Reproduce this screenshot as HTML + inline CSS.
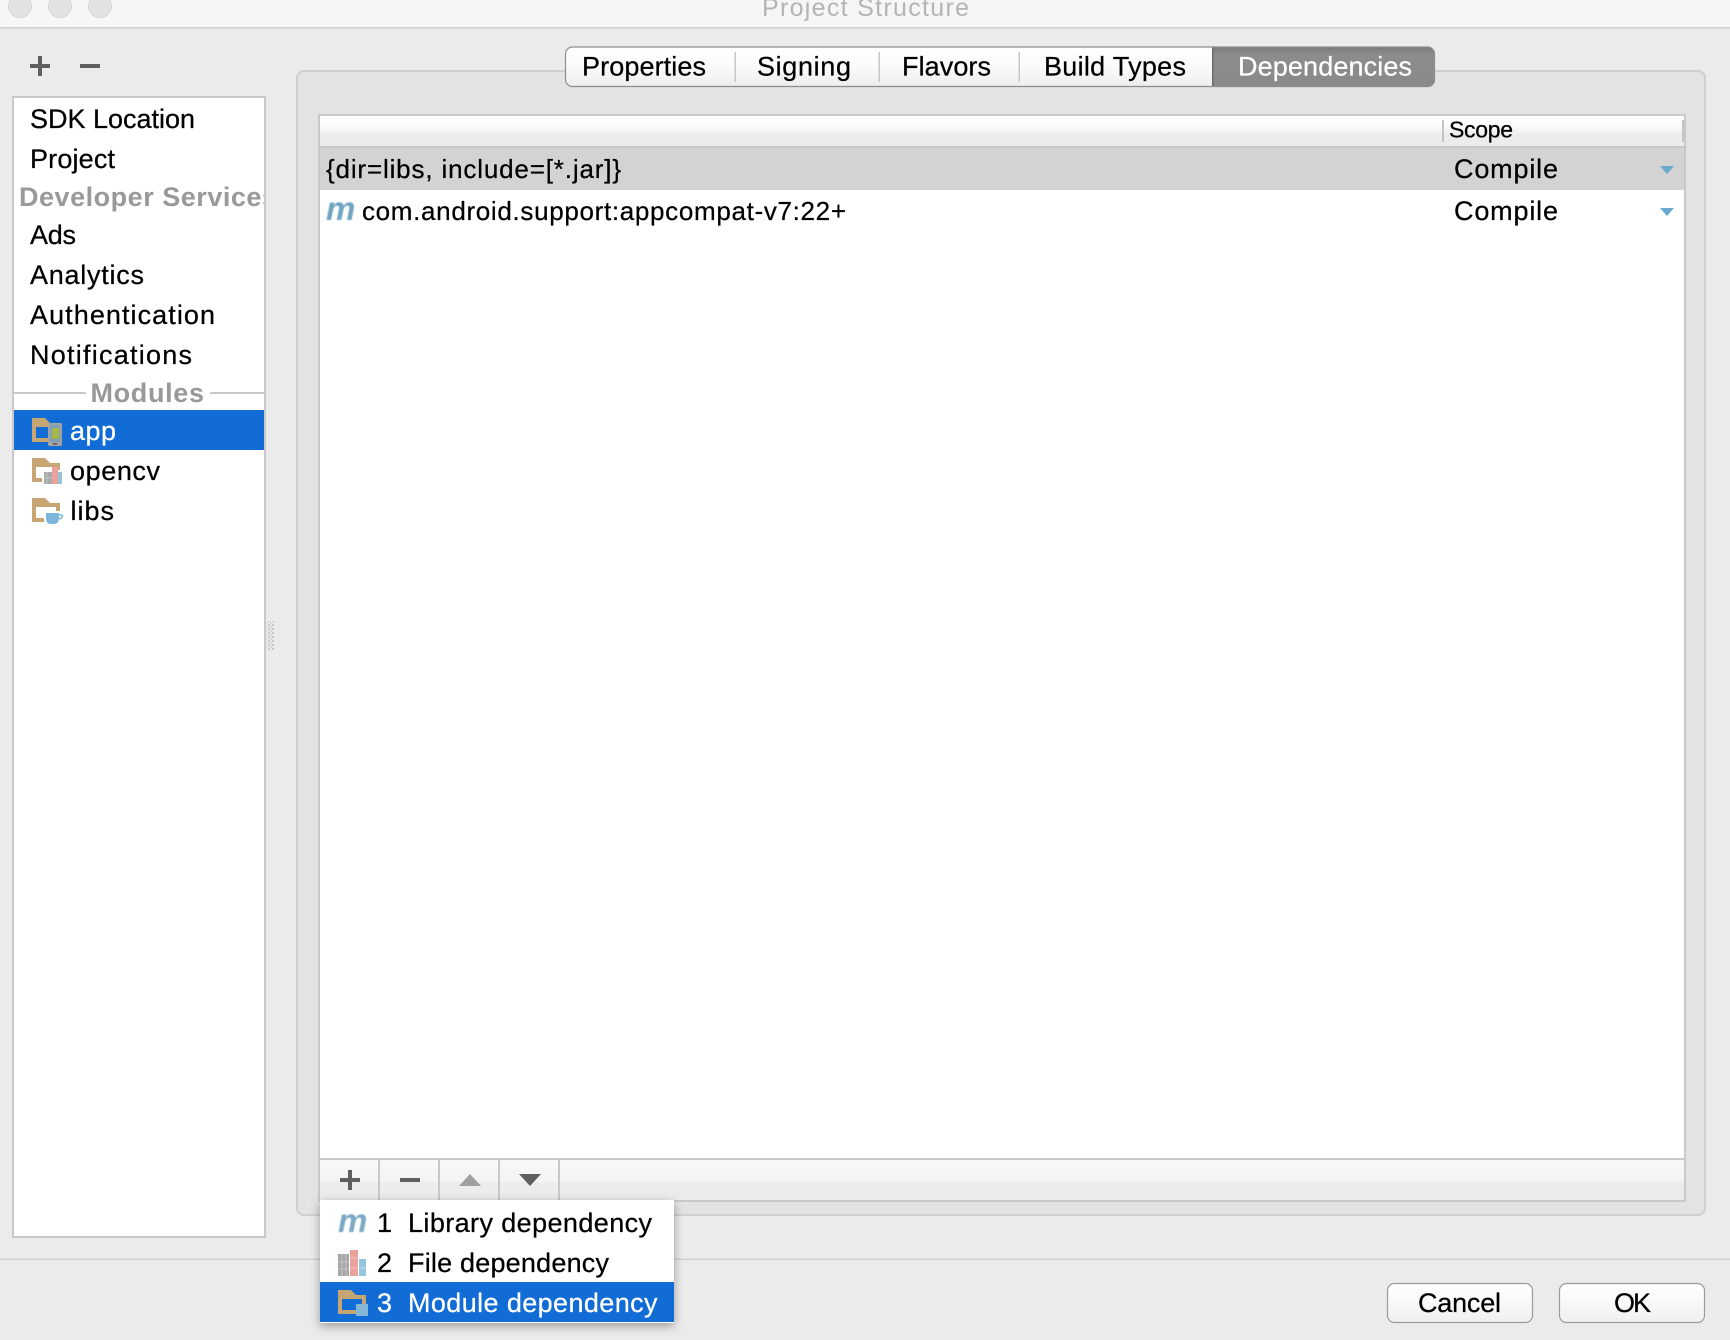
<!DOCTYPE html>
<html>
<head>
<meta charset="utf-8">
<style>
html,body{margin:0;padding:0;background:#ebebeb;width:1730px;height:1340px;overflow:hidden}
svg{display:block}
text{font-family:"Liberation Sans",sans-serif;font-size:27px;fill:#000;stroke:#000;stroke-width:.25px}
.w{fill:#fff;stroke:#fff}
.g{fill:#999;font-weight:bold;stroke:none}
.r{font-size:26px}
</style>
</head>
<body>
<svg width="1730" height="1340" viewBox="0 0 1730 1340" xmlns="http://www.w3.org/2000/svg">
<defs>
<linearGradient id="hd" x1="0" y1="0" x2="0" y2="1">
<stop offset="0" stop-color="#fff"/><stop offset=".3" stop-color="#fcfcfc"/><stop offset=".55" stop-color="#f1f1f1"/><stop offset=".6" stop-color="#ececec"/><stop offset="1" stop-color="#ececec"/>
</linearGradient>
<linearGradient id="tb" x1="0" y1="0" x2="0" y2="1">
<stop offset="0" stop-color="#f8f8f8"/><stop offset=".55" stop-color="#f3f3f3"/><stop offset=".56" stop-color="#ececec"/><stop offset="1" stop-color="#ececec"/>
</linearGradient>
<linearGradient id="tab" x1="0" y1="0" x2="0" y2="1">
<stop offset="0" stop-color="#fff"/><stop offset=".5" stop-color="#fafafa"/><stop offset="1" stop-color="#ededed"/>
</linearGradient>
<linearGradient id="dep" x1="0" y1="0" x2="0" y2="1">
<stop offset="0" stop-color="#7b7b7b"/><stop offset=".2" stop-color="#8c8c8c"/><stop offset="1" stop-color="#8a8a8a"/>
</linearGradient>
<linearGradient id="btn" x1="0" y1="0" x2="0" y2="1">
<stop offset="0" stop-color="#fff"/><stop offset=".45" stop-color="#fafafa"/><stop offset="1" stop-color="#efefef"/>
</linearGradient>
<clipPath id="lc"><rect x="14" y="98" width="250" height="1138"/></clipPath>
<clipPath id="tabclip"><rect x="565" y="47" width="870" height="40" rx="7"/></clipPath>
<filter id="sh" x="-15%" y="-15%" width="130%" height="140%"><feDropShadow dx="0" dy="3" stdDeviation="5" flood-color="#000" flood-opacity=".35"/></filter>
<filter id="bl" x="-10%" y="-10%" width="120%" height="120%"><feGaussianBlur stdDeviation=".6"/></filter>
<pattern id="dots" width="4" height="4" patternUnits="userSpaceOnUse"><rect width="2" height="2" fill="#c6c6c6"/><rect x="2" y="2" width="2" height="2" fill="#d8d8d8"/></pattern>
</defs>

<!-- window -->
<rect width="1730" height="1340" fill="#ebebeb"/>
<rect width="1730" height="27" fill="#f6f6f6"/>
<rect y="27" width="1730" height="1.5" fill="#d2d2d2"/>
<circle cx="20" cy="6" r="11.5" fill="#e2e2e2" stroke="#d6d6d6"/>
<circle cx="60" cy="6" r="11.5" fill="#e2e2e2" stroke="#d6d6d6"/>
<circle cx="100" cy="6" r="11.5" fill="#e2e2e2" stroke="#d6d6d6"/>
<text x="762" y="16" textLength="207" style="font-size:25px;fill:#b4b4b4;stroke:none">Project Structure</text>

<!-- left toolbar -->
<path d="M30 64h20v4H30zM38 56h4v20h-4z" fill="#5f5f5f"/>
<rect x="80" y="64" width="20" height="4" fill="#5f5f5f"/>

<!-- left list -->
<rect x="13" y="97" width="252" height="1140" fill="#fff" stroke="#c8c8c8" stroke-width="2"/>
<text x="30" y="128" textLength="165">SDK Location</text>
<text x="30" y="168" textLength="85">Project</text>
<g clip-path="url(#lc)"><text x="19" y="206" class="g" textLength="258">Developer Services</text></g>
<text x="30" y="244" textLength="46">Ads</text>
<text x="30" y="284" textLength="114">Analytics</text>
<text x="30" y="324" textLength="185">Authentication</text>
<text x="30" y="364" textLength="162">Notifications</text>
<rect x="14" y="392" width="72" height="2" fill="#c8c8c8"/>
<rect x="210" y="392" width="54" height="2" fill="#c8c8c8"/>
<text x="90.500" y="402" class="g" textLength="113.500">Modules</text>
<rect x="14" y="410" width="250" height="40" fill="#116cd6"/>

<!-- app icon -->
<path d="M32 418h13l5 5h10v19H32z" fill="#c8a674"/>
<rect x="36" y="427" width="20" height="11" fill="#116cd6"/>
<rect x="48" y="423" width="14" height="23" rx="1.5" fill="#a3a3a3"/>
<rect x="50" y="425" width="10" height="17" fill="#7f9fb6"/>
<rect x="52" y="428" width="7" height="11" fill="#a9b74a"/>
<rect x="53" y="443" width="4" height="1.5" fill="#555"/>
<text x="70" y="440" class="w" textLength="46">app</text>

<!-- opencv icon -->
<path d="M32 458h13l5 5h10v19H32z" fill="#c8a674"/>
<rect x="36" y="467" width="20" height="11" fill="#fff"/>
<rect x="42" y="470" width="20" height="14" fill="#fff"/>
<rect x="44" y="472" width="8" height="12" fill="#a9a9a9"/>
<path d="M47 472v12M44 478h8" stroke="#c4c4c4" stroke-width="1"/>
<rect x="52" y="467" width="6" height="17" fill="#e9a29c"/>
<rect x="58" y="472" width="4" height="12" fill="#95c3da"/>
<text x="70" y="480" textLength="90">opencv</text>

<!-- libs icon -->
<path d="M32 498h13l5 5h10v19H32z" fill="#c8a674"/>
<rect x="36" y="507" width="20" height="11" fill="#fff"/>
<rect x="44" y="511" width="18" height="14" fill="#fff"/>
<path d="M46 513h13v5q0 6-5 6h-3q-5 0-5-6z" fill="#7cb7db"/>
<path d="M59 515h2q1.500 0 1.500 1.500t-3.500 2.500" fill="none" stroke="#7cb7db" stroke-width="1.500"/>
<text x="70.500" y="520" textLength="43.500">libs</text>

<!-- splitter -->
<rect x="267" y="621" width="7" height="30" fill="url(#dots)"/>

<!-- right panel -->
<rect x="297" y="71" width="1408" height="1144" rx="7" fill="#e3e3e3" stroke="#cfcfcf" stroke-width="2"/>

<!-- tabs -->
<rect x="565" y="47" width="870" height="40" rx="7" fill="url(#tab)"/>
<g clip-path="url(#tabclip)">
<rect x="1213" y="47" width="222" height="40" fill="url(#dep)"/>
<rect x="1212" y="47" width="1.500" height="40" fill="#6b6b6b"/>
</g>
<rect x="565.500" y="47" width="869" height="39.500" rx="7" fill="none" stroke="#8d8d8d" stroke-width="1.200"/>
<rect x="734.500" y="52" width="1.500" height="30" fill="#c6c6c6"/>
<rect x="878.500" y="52" width="1.500" height="30" fill="#c6c6c6"/>
<rect x="1018.500" y="52" width="1.500" height="30" fill="#c6c6c6"/>
<text x="582" y="75.500" textLength="124">Properties</text>
<text x="757" y="75.500" textLength="94">Signing</text>
<text x="902" y="75.500" textLength="89">Flavors</text>
<text x="1044" y="75.500" textLength="142">Build Types</text>
<text x="1238" y="75.500" class="w" textLength="174">Dependencies</text>

<!-- table -->
<rect x="319" y="115" width="1366" height="1086" fill="#fff" stroke="#c9c9c9" stroke-width="2"/>
<rect x="320" y="116" width="1364" height="30" fill="url(#hd)"/>
<rect x="320" y="146" width="1364" height="2" fill="#c8c8c8"/>
<rect x="1442" y="120" width="2" height="22" fill="#c4c4c4"/>
<rect x="1682" y="120" width="2" height="22" fill="#c4c4c4"/>
<text x="1449" y="137.500" textLength="64" style="font-size:23px">Scope</text>
<rect x="320" y="148" width="1364" height="42" fill="#d3d3d3"/>
<text x="326" y="178" class="r" textLength="295">{dir=libs, include=[*.jar]}</text>
<text x="1454" y="178" textLength="104">Compile</text>
<path d="M1660 166h14l-7 8z" fill="#68abcf"/>
<g filter="url(#bl)"><text x="326" y="220" textLength="28" style="font-size:33px;font-weight:bold;font-style:italic;fill:#6fa5c2;stroke:none">m</text></g>
<text x="362" y="220" class="r" textLength="484">com.android.support:appcompat-v7:22+</text>
<text x="1454" y="220" textLength="104">Compile</text>
<path d="M1660 208h14l-7 8z" fill="#68abcf"/>

<!-- bottom toolbar -->
<rect x="320" y="1158" width="1364" height="2" fill="#c8c8c8"/>
<rect x="320" y="1160" width="1364" height="40" fill="url(#tb)"/>
<rect x="378" y="1159" width="2" height="41" fill="#c8c8c8"/>
<rect x="438" y="1159" width="2" height="41" fill="#c8c8c8"/>
<rect x="498" y="1159" width="2" height="41" fill="#c8c8c8"/>
<rect x="558" y="1159" width="2" height="41" fill="#c8c8c8"/>
<path d="M340 1178h20v4h-20zM348 1170h4v20h-4z" fill="#5f5f5f"/>
<rect x="400" y="1178" width="20" height="4" fill="#5f5f5f"/>
<path d="M459 1186l11-12 11 12z" fill="#a0a0a0"/>
<path d="M519 1174h22l-11 12z" fill="#5f5f5f"/>

<!-- bottom separator & buttons -->
<rect y="1258.500" width="1730" height="1.500" fill="#d2d2d2"/>
<rect x="1387.500" y="1283.500" width="145" height="39" rx="7" fill="url(#btn)" stroke="#9b9b9b" stroke-width="1.200"/>
<rect x="1559.500" y="1283.500" width="145" height="39" rx="7" fill="url(#btn)" stroke="#9b9b9b" stroke-width="1.200"/>
<text x="1418" y="1312" textLength="83">Cancel</text>
<text x="1614" y="1312" textLength="37">OK</text>

<!-- popup -->
<rect x="320" y="1200" width="354" height="123" fill="#fff" filter="url(#sh)"/>
<rect x="320" y="1282" width="354" height="40" fill="#116cd6"/>
<g filter="url(#bl)"><text x="338" y="1232" textLength="28" style="font-size:33px;font-weight:bold;font-style:italic;fill:#7aa9c2;stroke:none">m</text></g>
<text x="377" y="1232">1</text>
<text x="408" y="1232" textLength="244">Library dependency</text>

<rect x="338" y="1254" width="11" height="22" fill="#a6a6a6"/>
<path d="M342 1254v22M346 1254v22M338 1262h11M338 1269h11" stroke="#c6c6c6" stroke-width="1"/>
<rect x="350" y="1250" width="8" height="26" fill="#e9a29c"/>
<path d="M350 1258h8M350 1268h8" stroke="#f0c4c0" stroke-width="1"/>
<rect x="359" y="1259" width="7" height="17" fill="#95c6dd"/>
<path d="M359 1268h7" stroke="#c5e0ec" stroke-width="1"/>
<text x="377" y="1272">2</text>
<text x="408" y="1272" textLength="201">File dependency</text>

<path d="M338 1290h13l5 5h10v19H338z" fill="#c8a674"/>
<rect x="342" y="1299" width="20" height="11" fill="#116cd6"/>
<rect x="356" y="1304" width="12" height="12" fill="#85b6d6"/>
<text x="377" y="1312" class="w">3</text>
<text x="408" y="1312" class="w" textLength="249.500">Module dependency</text>
</svg>
</body>
</html>
